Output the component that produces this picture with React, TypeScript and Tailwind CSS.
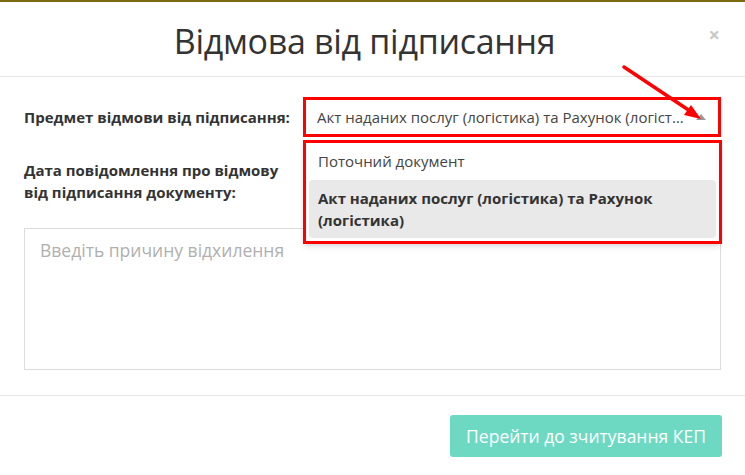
export default function App() {
  return (
    <div
      className="relative w-[745px] h-[475px] overflow-hidden bg-white border-t-2 border-[#7b6a12]"
      style={{ fontFamily: '"Open Sans", "Noto Sans", sans-serif' }}
    >
      {/* Header */}
      <div className="relative flex items-center justify-center h-[75px] border-b border-[#e5e5e5]">
        <h1 className="text-[34px] text-[#333] leading-none mt-[4px] mr-[16px] tracking-[-0.3px]">Відмова від підписання</h1>
        <button className="absolute right-[25px] top-[23px] text-[20px] leading-none text-[#c8c8c8] font-bold">×</button>
      </div>

      {/* Body */}
      <div className="relative px-[24px] pt-[20px] h-[319px] border-b border-[#e5e5e5]">
        <div className="flex items-center h-[40px]">
          <div className="w-[279px] shrink-0 whitespace-nowrap text-[15px] font-bold text-[#333]">Предмет відмови від підписання:</div>
          <div className="relative flex-1 min-w-0 h-[40px] border-[3px] border-[#ff0000] flex items-center pl-[11px] pr-[34px]">
            <span className="text-[15px] text-[#444] truncate">Акт наданих послуг (логістика) та Рахунок (логістика)</span>
            <svg className="absolute right-[12px] top-[14px]" width="10" height="6" viewBox="0 0 10 6">
              <polygon points="0,6 10,6 5,0" fill="#9a9a9a" />
            </svg>
          </div>
        </div>

        <div className="mt-[22px] w-[270px] text-[15px] leading-[22px] font-bold text-[#333]">
          Дата повідомлення про відмову від підписання документу:
        </div>

        <div className="mt-[25px] h-[142px] border border-[#dcdcdc] px-[15px] pt-[8px]">
          <span className="text-[17.5px] text-[#b0b0b0]">Введіть причину відхилення</span>
        </div>

        {/* Dropdown */}
        <div className="absolute left-[303px] top-[63px] w-[419px] h-[104px] bg-white border-[3px] border-[#ff0000] shadow-md px-[3px]">
          <div className="h-[37px] flex items-center pl-[9px] text-[15px] text-[#444]">Поточний документ</div>
          <div className="h-[58px] rounded-[4px] bg-[#e9e9e9] flex items-center pl-[9px] pr-[20px] text-[15px] leading-[22px] font-bold text-[#333]">
            Акт наданих послуг (логістика) та Рахунок (логістика)
          </div>
        </div>
      </div>

      {/* Footer */}
      <div className="flex justify-end px-[23px] pt-[19px]">
        <button className="w-[272px] h-[42px] rounded-[3px] bg-[#6dd9c3] text-white text-[17.5px]">
          Перейти до зчитування КЕП
        </button>
      </div>

      {/* Annotation arrow */}
      <svg className="absolute left-0 top-0 pointer-events-none" width="745" height="475">
        <line x1="624" y1="65" x2="690" y2="109" stroke="#ff0000" strokeWidth="3.5" strokeLinecap="round" />
        <polygon points="701,117 684,113 691,103" fill="#ff0000" />
      </svg>
    </div>
  );
}
